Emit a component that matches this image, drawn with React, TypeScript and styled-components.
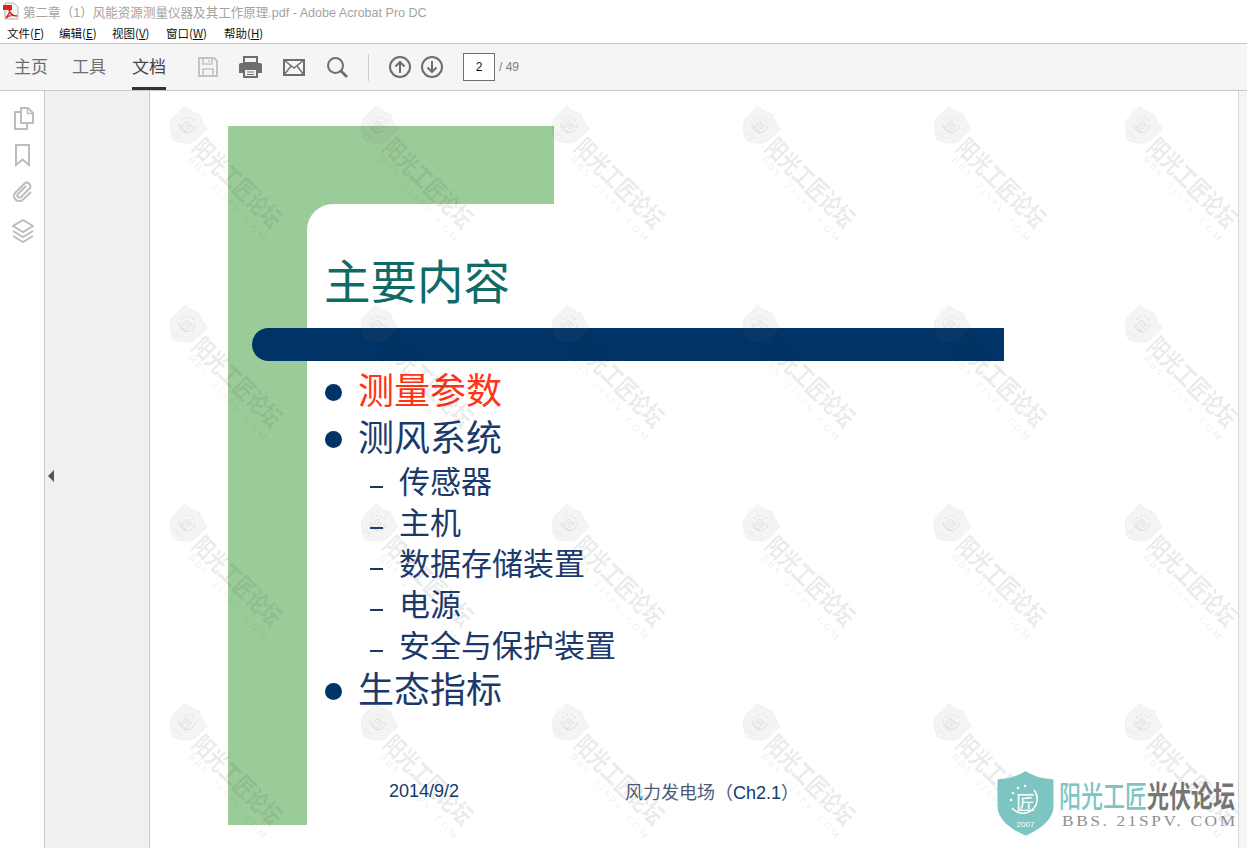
import React from "react";
import styled, { createGlobalStyle } from "styled-components";

const GlobalStyle = createGlobalStyle`
  html, body {
    margin: 0;
    padding: 0;
    background: #ffffff;
    overflow: hidden;
  }
  * { box-sizing: border-box; }
`;

const cjk = `"Noto Sans CJK SC", "Noto Sans", sans-serif`;

const Window = styled.div`
  width: 1247px;
  height: 848px;
  display: flex;
  flex-direction: column;
  overflow: hidden;
  font-family: ${cjk};
`;

const TitleBar = styled.div`
  height: 22px;
  display: flex;
  align-items: center;
  gap: 3px;
  padding-left: 2px;
  color: #a3a3a3;
  font-size: 12.55px;
  font-family: "Liberation Sans", ${cjk};
`;

const MenuBar = styled.div`
  height: 22px;
  display: flex;
  align-items: center;
  padding-left: 7px;
  border-bottom: 1px solid #c8c8c8;
`;

const MenuItem = styled.span<{ $width: number }>`
  width: ${(p) => p.$width}px;
  font-size: 11.5px;
  color: #111111;
  u { text-underline-offset: 1px; }
`;

const Toolbar = styled.div`
  height: 47px;
  display: flex;
  align-items: center;
  padding-left: 14px;
  background: #f5f5f5;
  border-bottom: 1px solid #c8c8c8;
`;

const Tab = styled.div<{ $active?: boolean; $width: number }>`
  width: ${(p) => p.$width}px;
  height: 46px;
  padding-top: 10px;
  font-size: 17px;
  line-height: 24px;
  color: ${(p) => (p.$active ? "#444444" : "#6e6e6e")};
  position: relative;
  flex: none;
  &::after {
    content: "";
    display: ${(p) => (p.$active ? "block" : "none")};
    position: absolute;
    left: 0;
    bottom: 0;
    width: 34px;
    height: 3px;
    background: #333333;
  }
`;

const ToolIcon = styled.svg<{ $gap: number }>`
  flex: none;
  margin-right: ${(p) => p.$gap}px;
`;

const Separator = styled.div`
  width: 1px;
  height: 27px;
  background: #cfcfcf;
  margin-right: 20px;
  flex: none;
`;

const PageBox = styled.div`
  width: 32px;
  height: 28px;
  background: #ffffff;
  border: 1px solid #6f6f6f;
  display: flex;
  align-items: center;
  justify-content: center;
  font-family: "Liberation Sans", sans-serif;
  font-size: 12px;
  color: #111111;
  flex: none;
`;

const PageCount = styled.span`
  margin-left: 4px;
  font-family: "Liberation Sans", sans-serif;
  font-size: 12px;
  color: #808080;
`;

const Body = styled.div`
  flex: 1;
  display: flex;
  min-height: 0;
`;

const Rail = styled.div`
  width: 45px;
  flex: none;
  display: flex;
  flex-direction: column;
  align-items: center;
  gap: 14px;
  padding: 16px 0 0 1px;
  border-right: 1px solid #c8c8c8;
  background: #ffffff;
`;

const SidePanel = styled.div`
  width: 105px;
  flex: none;
  position: relative;
  background: #f0f0f0;
  border-right: 1px solid #c8c8c8;
`;

const CollapseArrow = styled.div`
  position: absolute;
  left: 3px;
  top: 379px;
  width: 0;
  height: 0;
  border-top: 6px solid transparent;
  border-bottom: 6px solid transparent;
  border-right: 6px solid #555555;
`;

const Page = styled.div`
  flex: 1;
  position: relative;
  overflow: hidden;
  background: #ffffff;
  padding: 35px 0 0 78px;
`;

const Slide = styled.div`
  position: relative;
  width: 776px;
  height: 699px;
  padding: 130px 0 0 97px;
`;

const GreenColumn = styled.div`
  position: absolute;
  left: 0;
  top: 0;
  width: 79px;
  height: 699px;
  background: #9acb98;
`;

const GreenBand = styled.div`
  position: absolute;
  left: 0;
  top: 0;
  width: 326px;
  height: 78px;
  background: #9acb98;
`;

const GreenCorner = styled.div`
  position: absolute;
  left: 79px;
  top: 78px;
  width: 26px;
  height: 26px;
  background: #9acb98;
  &::after {
    content: "";
    display: block;
    width: 26px;
    height: 26px;
    background: #ffffff;
    border-top-left-radius: 26px;
  }
`;

const SlideTitle = styled.h1`
  position: relative;
  margin: 0 0 0 -1px;
  height: 54px;
  font-size: 46.5px;
  line-height: 46px;
  font-weight: 400;
  color: #0f6b66;
`;

const Bar = styled.div`
  position: relative;
  margin: 18px 0 7px -73px;
  width: 752px;
  height: 33px;
  background: #003366;
  border-radius: 17px 0 0 17px;
`;

const List = styled.div`
  position: relative;
  display: flex;
  flex-direction: column;
`;

const Label = styled.span`
  margin-bottom: 6px;
`;

const TopItem = styled.div<{ $red?: boolean }>`
  height: 47px;
  display: flex;
  align-items: center;
  gap: 16px;
  font-size: 36px;
  line-height: 41px;
  color: ${(p) => (p.$red ? "#ff3316" : "#1b3a6b")};
  &::before {
    content: "";
    width: 17px;
    height: 17px;
    border-radius: 50%;
    background: #003366;
    flex: none;
    margin-top: 2px;
  }
`;

const SubItem = styled.div`
  height: 41px;
  display: flex;
  align-items: center;
  gap: 16px;
  padding-left: 45px;
  font-size: 31px;
  line-height: 35px;
  color: #1b3a6b;
  &::before {
    content: "";
    width: 13px;
    height: 2px;
    background: #1b3a6b;
    flex: none;
    margin-top: 8px;
  }
`;

const SlideFooter = styled.div`
  position: relative;
  margin: 65px 0 0 64px;
  height: 24px;
  display: flex;
  align-items: center;
  font-size: 18px;
  color: #123a6b;
  font-family: "Liberation Sans", ${cjk};
  text-spacing-trim: space-all;
`;

const FooterDate = styled.span`
  width: 236px;
`;

const FooterCn = styled.span`
  color: #4a5c78;
`;

const WatermarkLayer = styled.div`
  position: absolute;
  left: 17px;
  top: 16px;
  display: grid;
  grid-template-columns: repeat(6, 191px);
  grid-auto-rows: 199px;
  pointer-events: none;
`;

const Watermark = styled.div`
  position: relative;
  width: 191px;
  height: 199px;
`;

const WatermarkName = styled.span`
  position: absolute;
  left: 14px;
  top: 66px;
  width: 116px;
  font-size: 19px;
  line-height: 20px;
  font-weight: 700;
  white-space: nowrap;
  color: rgba(50, 50, 50, 0.1);
  transform: rotate(45deg) scaleY(1.3);
`;

const WatermarkUrl = styled.span`
  position: absolute;
  left: 4px;
  top: 87px;
  width: 114px;
  font-family: "Liberation Serif", serif;
  font-size: 10px;
  line-height: 12px;
  letter-spacing: 2.3px;
  white-space: nowrap;
  color: rgba(60, 60, 60, 0.1);
  transform: rotate(48deg);
`;

const WatermarkShield = styled.div`
  position: absolute;
  left: 3px;
  top: 1px;
  transform: rotate(45deg);
`;

const Logo = styled.div`
  position: absolute;
  left: 847px;
  top: 679px;
  width: 241px;
  height: 67px;
  display: flex;
  gap: 5px;
`;

const LogoText = styled.div`
  display: flex;
  flex-direction: column;
  padding-top: 9px;
`;

const LogoName = styled.div`
  display: flex;
  height: 31px;
  font-size: 22px;
  line-height: 31px;
  transform: scaleY(1.35);
  font-weight: 500;
  white-space: nowrap;
`;

const LogoTeal = styled.span`
  color: #7cc5c3;
  width: 88px;
`;

const LogoGray = styled.span`
  color: #757575;
  font-weight: 700;
`;

const LogoUrl = styled.div`
  margin: 5px 0 0 3px;
  font-family: "Liberation Serif", serif;
  font-size: 14px;
  line-height: 13px;
  letter-spacing: 2.1px;
  color: #8f8f8f;
  white-space: nowrap;
  transform: scaleX(1.24);
  transform-origin: left center;
`;

const ScrollGutter = styled.div`
  width: 9px;
  flex: none;
  background: #f5f5f5;
  border-left: 1px solid #d6d6d6;
`;

interface IShield {
  size: number;
  fill: string;
  mark: string;
  edge?: string;
}

function Shield({ size, fill, mark, edge }: IShield) {
  const h = Math.round((size * 66) / 57);
  return (
    <svg width={size} height={h} viewBox="0 0 57 66" style={{ flex: "none", display: "block" }}>
      <path
        d="M28.5 1 C21 6 11 9 2 9 Q0.5 9 0.5 11 V36 C0.5 50 15 60 28.5 65.5 C42 60 56.5 50 56.5 36 V11 Q56.5 9 55 9 C46 9 36 6 28.5 1Z"
        fill={fill}
        stroke={edge || "none"}
      />
      <path d="M37 20 A14 14 0 1 1 15 38" fill="none" stroke={mark} strokeWidth="1.5" />
      <circle cx="14" cy="30" r="1.3" fill={mark} />
      <circle cx="16" cy="23" r="1.3" fill={mark} />
      <circle cx="21" cy="18" r="1.3" fill={mark} />
      <circle cx="28" cy="16" r="1.3" fill={mark} />
      <text x="28.5" y="40" textAnchor="middle" fontSize="19" fontFamily={cjk} fill={mark}>
        匠
      </text>
      <text x="28.5" y="57" textAnchor="middle" fontSize="8" fontFamily="Liberation Sans, sans-serif" fill={mark}>
        2007
      </text>
    </svg>
  );
}

const tabs = [
  { label: "主页", width: 58 },
  { label: "工具", width: 60 },
  { label: "文档", width: 65, active: true },
];

const menus = [
  { label: "文件", key: "F", width: 52 },
  { label: "编辑", key: "E", width: 53 },
  { label: "视图", key: "V", width: 54 },
  { label: "窗口", key: "W", width: 58 },
  { label: "帮助", key: "H", width: 60 },
];

const subItems = ["传感器", "主机", "数据存储装置", "电源", "安全与保护装置"];

export default function App() {
  return (
    <Window>
      <GlobalStyle />
      <TitleBar>
        <svg width="18" height="18" viewBox="0 0 18 18" style={{ flex: "none" }}>
          <path d="M3 1 H12 L16 5 V17 H3Z" fill="#f4f4f4" stroke="#b5b5b5" />
          <path d="M1 3 H10 V8 H1Z" fill="#d8261c" />
          <path d="M7 8 C8 12 10 14 15 14 C11 13 7 13 4 16 C6 13 8 11 8 8" fill="none" stroke="#d8261c" strokeWidth="1.4" />
        </svg>
        <span>第二章（1）风能资源测量仪器及其工作原理.pdf - Adobe Acrobat Pro DC</span>
      </TitleBar>

      <MenuBar>
        {menus.map((m) => (
          <MenuItem key={m.key} $width={m.width}>
            {m.label}(<u>{m.key}</u>)
          </MenuItem>
        ))}
      </MenuBar>

      <Toolbar>
        {tabs.map((t) => (
          <Tab key={t.label} $width={t.width} $active={t.active}>
            {t.label}
          </Tab>
        ))}
        <ToolIcon $gap={20} width="22" height="22" viewBox="0 0 22 22" fill="none" stroke="#c4c4c4" strokeWidth="2">
          <path d="M2 2 H17 L20 5 V20 H2Z" />
          <path d="M6 2 V8 H15 V2 M12 4 V6 M6 20 V13 H16 V20" strokeWidth="1.6" />
        </ToolIcon>
        <ToolIcon $gap={21} width="23" height="22" viewBox="0 0 23 22">
          <path d="M5 1 H18 V7 H5Z" fill="none" stroke="#6e6e6e" strokeWidth="2" />
          <path d="M2 7 H21 A2 2 0 0 1 23 9 V17 H18 V13 H5 V17 H0 V9 A2 2 0 0 1 2 7Z" fill="#6e6e6e" />
          <path d="M5 13 H18 V21 H5Z" fill="none" stroke="#6e6e6e" strokeWidth="2" />
          <path d="M8 16 H15 M8 18.5 H15" stroke="#6e6e6e" strokeWidth="1.2" />
        </ToolIcon>
        <ToolIcon $gap={21} width="22" height="22" viewBox="0 0 22 22" fill="none" stroke="#6e6e6e">
          <rect x="1" y="4" width="20" height="15" strokeWidth="2" />
          <path d="M1 4 L11 12 L21 4 M1 19 L8 10 M21 19 L14 10" strokeWidth="1.4" />
        </ToolIcon>
        <ToolIcon $gap={20} width="22" height="22" viewBox="0 0 22 22" fill="none" stroke="#6e6e6e" strokeWidth="2">
          <circle cx="9.5" cy="9.5" r="7.5" />
          <path d="M15 15 L21 21" strokeWidth="2.8" />
        </ToolIcon>
        <Separator />
        <ToolIcon $gap={10} width="22" height="22" viewBox="0 0 22 22" fill="none" stroke="#6e6e6e" strokeWidth="2">
          <circle cx="11" cy="11" r="10" />
          <path d="M11 17 V6 M6.5 10.5 L11 6 L15.5 10.5" />
        </ToolIcon>
        <ToolIcon $gap={20} width="22" height="22" viewBox="0 0 22 22" fill="none" stroke="#6e6e6e" strokeWidth="2">
          <circle cx="11" cy="11" r="10" />
          <path d="M11 5 V16 M6.5 11.5 L11 16 L15.5 11.5" />
        </ToolIcon>
        <PageBox>2</PageBox>
        <PageCount>/ 49</PageCount>
      </Toolbar>

      <Body>
        <Rail>
          <svg width="20" height="23" viewBox="0 0 20 23" fill="none" stroke="#bdbdbd" strokeWidth="2" style={{ marginLeft: 2 }}>
            <path d="M7 1 H14 L19 6 V16 H7Z" />
            <path d="M13.5 1.5 V6.5 H18.5" strokeWidth="1.4" />
            <path d="M7 5 H1 V22 H13 V16" />
          </svg>
          <svg width="15" height="23" viewBox="0 0 15 23" fill="none" stroke="#bdbdbd" strokeWidth="2">
            <path d="M1 1 H14 V21 L7.5 15.5 L1 21Z" />
          </svg>
          <svg width="21" height="21" viewBox="0 0 21 21" fill="none" stroke="#bdbdbd" strokeWidth="2">
            <path d="M14 5 L6 13 A2 2 0 0 0 9 16 L18 7 A3.8 3.8 0 0 0 13 2 L3 12 A5.2 5.2 0 0 0 10.5 19 L19 11" />
          </svg>
          <svg width="22" height="24" viewBox="0 0 22 24" fill="none" stroke="#bdbdbd" strokeWidth="2" style={{ marginTop: 3 }}>
            <path d="M11 1 L21 7 L11 13 L1 7Z" />
            <path d="M1 12 L11 18 L21 12 M1 17 L11 23 L21 17" />
          </svg>
        </Rail>

        <SidePanel>
          <CollapseArrow />
        </SidePanel>

        <Page>
          <Slide>
            <GreenColumn />
            <GreenBand />
            <GreenCorner />
            <SlideTitle>主要内容</SlideTitle>
            <Bar />
            <List>
              <TopItem $red><Label>测量参数</Label></TopItem>
              <TopItem><Label>测风系统</Label></TopItem>
              {subItems.map((s) => (
                <SubItem key={s}><Label>{s}</Label></SubItem>
              ))}
              <TopItem><Label>生态指标</Label></TopItem>
            </List>
            <SlideFooter>
              <FooterDate>2014/9/2</FooterDate>
              <span><FooterCn>风力发电场（</FooterCn>Ch2.1<FooterCn>）</FooterCn></span>
            </SlideFooter>
          </Slide>

          <WatermarkLayer>
            {Array.from({ length: 24 }).map((_, i) => (
              <Watermark key={i}>
                <WatermarkShield>
                  <Shield size={33} fill="rgba(110,110,110,0.08)" edge="rgba(90,90,90,0.08)" mark="rgba(60,60,60,0.12)" />
                </WatermarkShield>
                <WatermarkName>阳光工匠论坛</WatermarkName>
                <WatermarkUrl>BBS. 21SPV. COM</WatermarkUrl>
              </Watermark>
            ))}
          </WatermarkLayer>

          <Logo>
            <Shield size={57} fill="#7cc5c3" mark="#ffffff" />
            <LogoText>
              <LogoName>
                <LogoTeal>阳光工匠</LogoTeal>
                <LogoGray>光伏论坛</LogoGray>
              </LogoName>
              <LogoUrl>BBS. 21SPV. COM</LogoUrl>
            </LogoText>
          </Logo>
        </Page>

        <ScrollGutter />
      </Body>
    </Window>
  );
}
